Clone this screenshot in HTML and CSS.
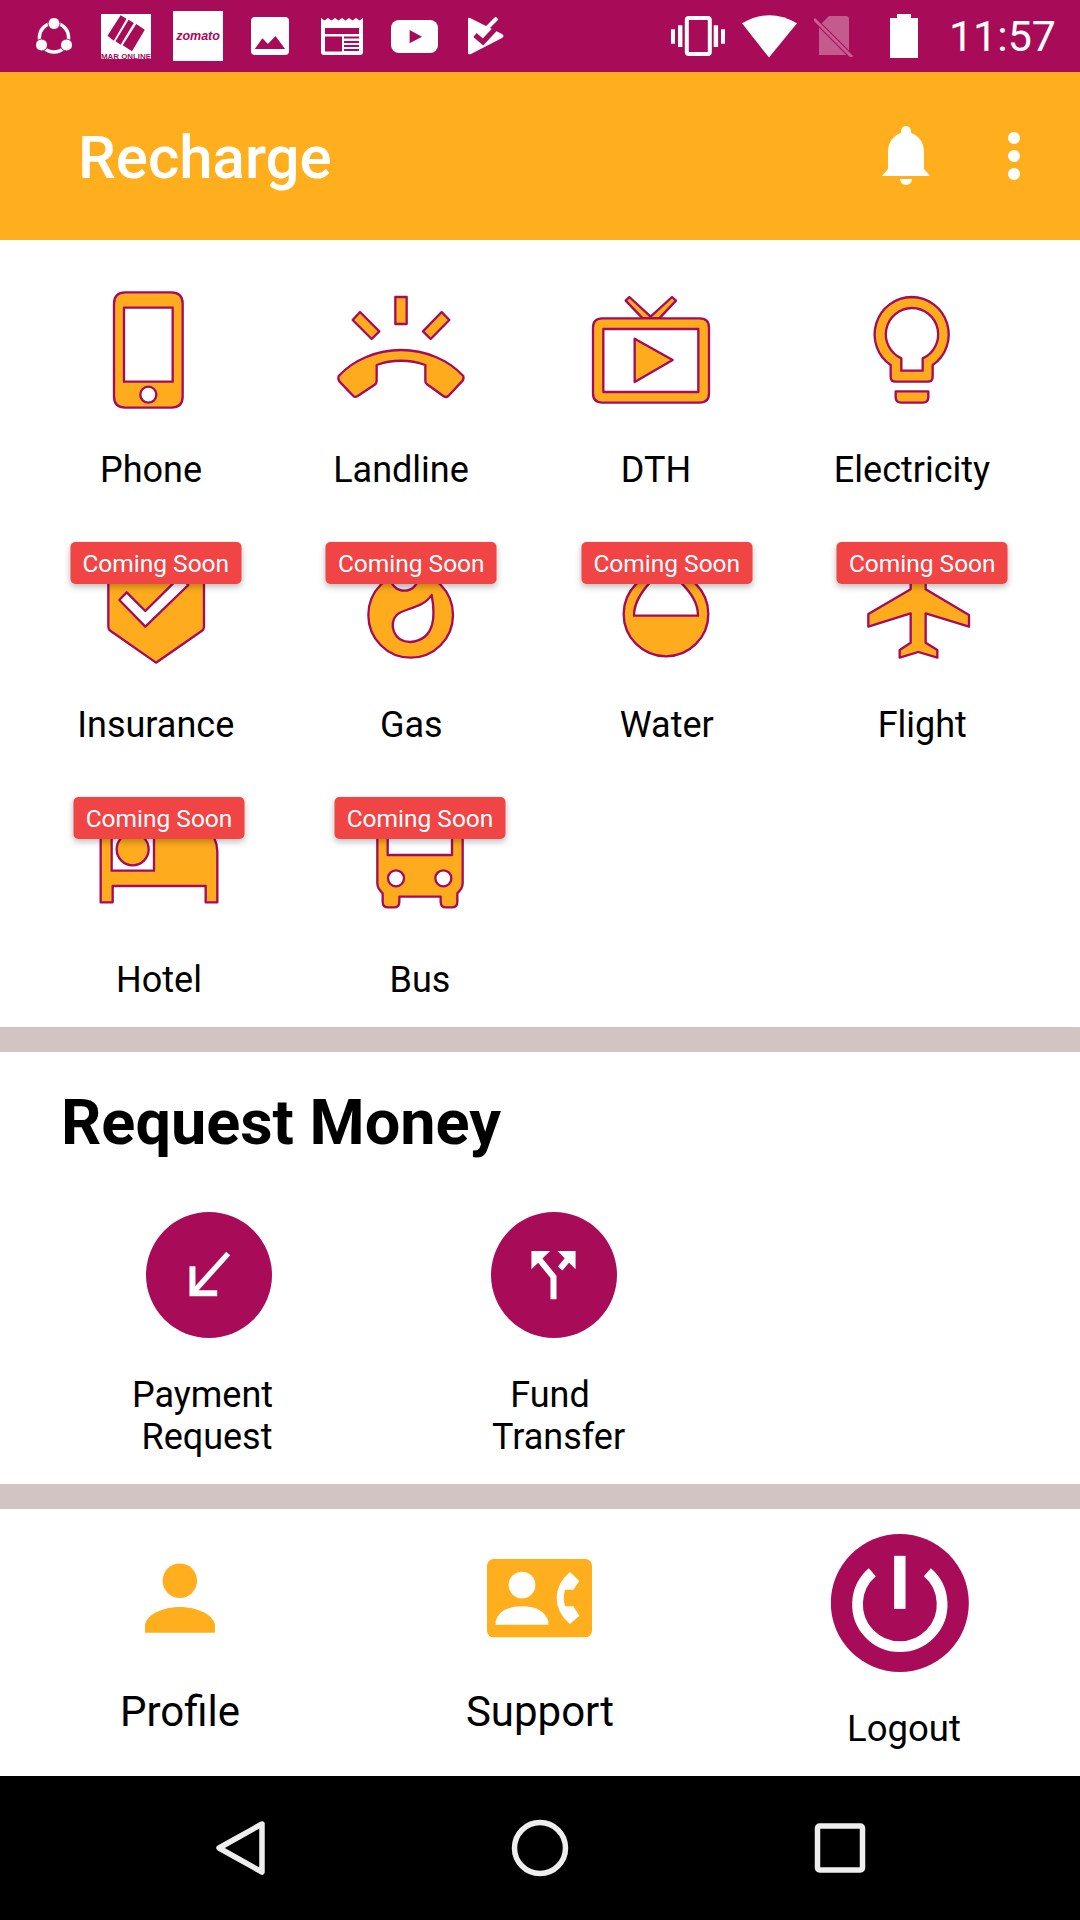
FILE: index.html
```html
<!DOCTYPE html>
<html lang="en">
<head>
    <meta charset="UTF-8">
    <meta name="viewport" content="width=device-width, initial-scale=1.0">
    <title>Recharge</title>
    <link rel="stylesheet" href="styles.css">
</head>
<body>
    <div class="screen">
        <!-- Android status bar -->
        <header class="status-bar">
            <div class="status-left">
                <span class="slot">
                    <svg width="36" height="36" viewBox="0 0 36 36">
                        <circle class="share-ring" cx="18" cy="19.5" r="14.6"/>
                        <circle class="share-dot" cx="18" cy="5.5" r="6"/><circle class="share-dot" cx="5.5" cy="27" r="6"/><circle class="share-dot" cx="30.5" cy="27" r="6"/>
                    </svg>
                </span>
                <span class="slot">
                    <svg width="50" height="45" viewBox="0 0 50 45">
                        <rect class="w" width="50" height="45"/>
                        <polygon class="p" points="19.6,1.3 25.5,4.7 12.8,26.7 6.5,21.7"/>
                        <polygon class="p" points="27.6,5.7 32.8,9 19.6,30.7 14.5,27.3"/>
                        <polygon class="p" points="35.2,10 43.8,15.7 31,37.3 21.7,31.3"/>
                        <text class="mar-text" x="0" y="44.5" textLength="50" lengthAdjust="spacingAndGlyphs">MAR ONLINE</text>
                    </svg>
                </span>
                <span class="slot"><span class="zomato">zomato</span></span>
                <span class="slot">
                    <svg width="38" height="38" viewBox="0 0 38 38">
                        <rect class="w" width="38" height="38" rx="4"/>
                        <polygon class="p" points="3.8,32 11.4,21.3 16.9,27 24.5,19 34.1,32"/>
                    </svg>
                </span>
                <span class="slot">
                    <svg width="42" height="38" viewBox="0 0 42 38">
                        <path class="w" d="M0 1 L3.5 3.5 7 1 10.5 3.5 14 1 17.5 3.5 21 1 24.5 3.5 28 1 31.5 3.5 35 1 38.5 3.5 42 1 V35 Q42 38 39 38 H3 Q0 38 0 35 Z"/>
                        <rect class="p" x="4" y="11" width="34" height="6"/>
                        <rect class="p" x="4" y="19.5" width="17" height="15"/>
                        <rect class="p" x="23" y="19.5" width="15" height="2"/>
                        <rect class="p" x="23" y="24" width="15" height="2"/>
                        <rect class="p" x="23" y="28" width="15" height="2"/>
                        <rect class="p" x="23" y="32" width="15" height="2"/>
                    </svg>
                </span>
                <span class="slot">
                    <svg width="47" height="33" viewBox="0 0 47 33">
                        <rect class="w" width="47" height="33" rx="8"/>
                        <polygon class="p" points="18.6,10 31,16.7 18.6,23.3"/>
                    </svg>
                </span>
                <span class="slot">
                    <svg width="36" height="38" viewBox="0 0 36 38">
                        <path class="w" d="M0 2 Q0 0 2 1 L34 17 Q37 19 34 21 L3 37 Q0 38 0 36 Z"/>
                        <path class="check-cut" d="M7 18 L15 25 L28 11"/>
                        <path class="check-top" d="M18 12 L29 1"/>
                    </svg>
                </span>
            </div>
            <div class="status-right">
                <svg class="st-vibrate" width="54" height="40" viewBox="0 0 54 40">
                    <rect class="outline" x="15.8" y="2" width="23" height="36" rx="2"/>
                    <rect class="w" x="0" y="13.3" width="4" height="14.4"/><rect class="w" x="7" y="9.3" width="4.4" height="21.7"/>
                    <rect class="w" x="42.7" y="9.3" width="4.4" height="21.7"/><rect class="w" x="50" y="13.3" width="4" height="14.4"/>
                </svg>
                <svg class="st-wifi" width="55" height="43" viewBox="0 0 55 43">
                    <path class="w" d="M0 8.3 Q27.5 -8 55 8.3 L27 42.5 Z"/>
                </svg>
                <svg class="st-sim" width="40" height="41" viewBox="0 0 40 41">
                    <path class="w-dim" d="M15 0 H32 Q35 0 35 3 V39 H5 V10 Z"/>
                    <path class="sim-gap" d="M0 3 L38 41"/>
                    <path class="sim-slash" d="M0 3 L38 41"/>
                </svg>
                <svg class="st-battery" width="28" height="44" viewBox="0 0 28 44">
                    <path class="w" d="M7 0 H21 V4 H28 V44 H0 V4 H7 Z"/>
                </svg>
                <span class="clock">11:57</span>
            </div>
        </header>

        <div class="app-bar">
            <h1 class="app-title">Recharge</h1>
            <div class="app-actions">
                <span class="action">
                    <svg width="48" height="60" viewBox="0 0 48 60">
                        <path class="w" d="M0 50 L6 43 V26 C6 16 12 9 19 7 V5 A5 5 0 0 1 29 5 V7 C36 9 42 16 42 26 V43 L48 50 Z"/>
                        <path class="w" d="M18 53 H30 A6 6 0 0 1 18 53 Z"/>
                    </svg>
                </span>
                <span class="action dots"><i></i><i></i><i></i></span>
            </div>
        </div>

        <section class="services">
            <div class="service-row row-one">
                <div class="service">
                    <svg class="ic" viewBox="63 45 420 390">
                        <path d="M196 67 H334 Q368 67 368 101 V379 Q368 413 334 413 H196 Q162 413 162 379 V101 Q162 67 196 67 Z M192 113 V335 H338 V113 Z M241 374 A24 24 0 1 0 289 374 A24 24 0 1 0 241 374 Z"/>
                    </svg>
                    <p class="service-name">Phone</p>
                </div>
                <div class="service">
                    <svg class="ic" viewBox="813 45 420 390">
                        <rect x="1006" y="81" width="34" height="81"/>
                        <polygon points="900,126 958,184 935,207 878,150"/>
                        <polygon points="1145,126 1168,150 1112,207 1089,184"/>
                        <path d="M836 318 C880 270 950 240 1023 240 C1096 240 1166 270 1210 318 Q1212 325 1208 332 L1165 378 Q1158 384 1150 378 L1100 342 Q1096 338 1096 332 L1096 285 C1050 268 995 268 950 285 L950 332 Q950 340 944 344 L893 378 Q885 383 880 378 L838 334 Q833 325 836 318 Z"/>
                    </svg>
                    <p class="service-name">Landline</p>
                </div>
                <div class="service">
                    <svg class="ic" viewBox="78 45 420 390">
                        <polygon points="197,92 208,81 272,140 336,81 348,92 298,145 248,145"/>
                        <path d="M127 145 H419 Q447 145 447 173 V370 Q447 398 419 398 H127 Q99 398 99 370 V173 Q99 145 127 145 Z M130 177 V366 H415 V177 Z"/>
                        <polygon points="224,206 338,270 224,336"/>
                    </svg>
                    <p class="service-name">DTH</p>
                </div>
                <div class="service">
                    <svg class="ic" viewBox="846 45 420 390">
                        <path d="M1055 81 A112 112 0 0 1 1118 285 V320 Q1118 335 1103 335 H1007 Q992 335 992 320 V285 A112 112 0 0 1 1055 81 Z M1055 114 A79 79 0 0 0 1024 265 V302 H1088 V265 A79 79 0 0 0 1055 114 Z"/>
                        <path d="M1007 364 H1105 V382 Q1105 398 1088 398 H1024 Q1007 398 1007 382 Z"/>
                    </svg>
                    <p class="service-name">Electricity</p>
                </div>
            </div>

            <div class="service-row row-two">
                <div class="service">
                    <span class="badge">Coming Soon</span>
                    <svg class="ic" viewBox="78 30 420 390">
                        <path d="M145 60 H432 V290 Q432 298 425 303 L288 398 L152 303 Q145 298 145 290 Z M178 210 L256 290 L385 165 L360 140 L256 243 L200 187 Z"/>
                    </svg>
                    <p class="service-name">Insurance</p>
                </div>
                <div class="service">
                    <span class="badge">Coming Soon</span>
                    <svg class="ic" viewBox="843 30 420 390">
                        <path d="M1052 127 C1122 127 1179 184 1179 255 C1179 326 1122 383 1052 383 C982 383 925 326 925 255 C925 184 982 127 1052 127 Z M1115 195 C1090 235 1030 235 1010 255 C985 280 1000 336 1050 336 C1130 330 1125 250 1115 195 Z"/>
                        <circle class="hole" cx="1033" cy="140" r="42"/>
                    </svg>
                    <p class="service-name">Gas</p>
                </div>
                <div class="service">
                    <span class="badge">Coming Soon</span>
                    <svg class="ic" viewBox="111 30 420 390">
                        <path d="M318 125 A127 127 0 1 1 318 379 A127 127 0 1 1 318 125 Z M222 257 H414 C414 220 395 190 360 155 L318 110 L272 155 C240 190 222 220 222 257 Z"/>
                    </svg>
                    <p class="service-name">Water</p>
                </div>
                <div class="service">
                    <span class="badge">Coming Soon</span>
                    <svg class="ic" viewBox="879 30 420 390">
                        <path d="M1055 120 Q1078 90 1100 120 V178 L1230 255 V290 L1100 250 V338 L1135 360 V383 L1078 366 L1022 383 V360 L1055 338 V250 L928 290 V252 L1055 178 Z"/>
                    </svg>
                    <p class="service-name">Flight</p>
                </div>
            </div>

            <div class="service-row row-three">
                <div class="service">
                    <span class="badge">Coming Soon</span>
                    <svg class="ic" viewBox="87 45 420 390">
                        <path d="M122 130 H430 Q472 170 472 215 V367 H437 V318 H158 V367 H122 Z M155 130 V272 H282 V130 Z"/>
                        <circle cx="218" cy="208" r="48"/>
                    </svg>
                    <p class="service-name">Hotel</p>
                </div>
                <div class="service">
                    <span class="badge">Coming Soon</span>
                    <svg class="ic" viewBox="870 45 420 390">
                        <path d="M952 120 H1208 V310 Q1208 325 1192 340 V365 Q1192 382 1175 382 H1158 Q1142 382 1142 365 V350 H1018 V365 Q1018 382 1002 382 H985 Q968 382 968 365 V340 Q952 325 952 310 Z M983 130 V225 H1176 V130 Z M984 295 A24 24 0 1 0 1032 295 A24 24 0 1 0 984 295 Z M1126 295 A24 24 0 1 0 1174 295 A24 24 0 1 0 1126 295 Z"/>
                    </svg>
                    <p class="service-name">Bus</p>
                </div>
            </div>
        </section>

        <div class="divider"></div>

        <section class="request">
            <h2 class="request-title">Request Money</h2>
            <div class="request-row">
                <div class="request-item item-payment">
                    <svg class="round" viewBox="78 66 377 377">
                        <circle class="p" cx="266.5" cy="254.5" r="188.5"/>
                        <path class="arrow" d="M217 228 V309 H291"/>
                        <path class="arrow-thin" d="M217 309 L324 190"/>
                    </svg>
                    <p class="request-name">Payment
 Request</p>
                </div>
                <div class="request-item item-fund">
                    <svg class="round" viewBox="1113 66 377 377">
                        <circle class="p" cx="1301.5" cy="254.5" r="188.5"/>
                        <path class="arrow" d="M1300 327 V260 L1255 205"/>
                        <path class="arrow" d="M1320 235 L1345 205"/>
                        <polygon class="w" points="1234,183 1290,183 1234,237"/>
                        <polygon class="w" points="1366,183 1312,183 1366,237"/>
                    </svg>
                    <p class="request-name">Fund
  Transfer</p>
                </div>
            </div>
        </section>

        <div class="divider"></div>

        <section class="account">
            <div class="account-item">
                <svg class="account-ic" width="70" height="79" viewBox="103 148 211 237">
                    <circle class="o" cx="208" cy="213" r="52"/>
                    <path class="o" d="M103 370 V345 C110 310 165 292 208 292 C251 292 306 310 314 345 V370 Z"/>
                </svg>
                <p class="account-name">Profile</p>
            </div>
            <div class="account-item">
                <svg class="account-ic support-ic" width="105" height="79" viewBox="1131 148 315 237">
                    <rect class="o" x="1131" y="148" width="315" height="235" rx="20"/>
                    <circle class="w" cx="1236" cy="226" r="40"/>
                    <path class="w" d="M1157 345 V335 Q1170 290 1236 290 Q1300 290 1315 335 V345 Z"/>
                    <path class="w" d="M1380 187 L1408 214 L1390 240 H1365 Q1358 265 1365 290 H1390 L1408 318 L1380 343 Q1340 310 1340 265 Q1340 220 1380 187 Z"/>
                </svg>
                <p class="account-name">Support</p>
            </div>
            <div class="account-item logout">
                <svg width="138" height="138" viewBox="95 72 411 411">
                    <circle class="p" cx="300" cy="277.5" r="205.5"/>
                    <rect class="w" x="283" y="137" width="34" height="158"/>
                    <path class="power" d="M218 186 A126 126 0 1 0 382 186"/>
                </svg>
                <p class="logout-name">Logout</p>
            </div>
        </section>

        <!-- Android navigation bar -->
        <nav class="nav-bar">
            <svg width="60" height="60" viewBox="0 0 60 60">
                <path class="nav-ic" d="M52 6 L9 30 L52 54 Z"/>
            </svg>
            <svg width="60" height="60" viewBox="0 0 60 60">
                <circle class="nav-ic" cx="30" cy="30" r="25.5"/>
            </svg>
            <svg width="60" height="60" viewBox="0 0 60 60">
                <rect class="nav-ic" x="7.5" y="8" width="45" height="44" rx="2"/>
            </svg>
        </nav>
    </div>
</body>
</html>
```

FILE: styles.css
```css
* {
    box-sizing: border-box;
}

body {
    margin: 0;
    background: #fff;
    font-family: Roboto, "Liberation Sans", sans-serif;
    color: #000;
}

p, h1, h2 {
    margin: 0;
}

.screen {
    width: 1080px;
    height: 1920px;
    display: flex;
    flex-direction: column;
    overflow: hidden;
}

svg {
    display: block;
    flex-shrink: 0;
}

/* shared svg fills */
.w { fill: #fff; }
.p { fill: #a80b58; }
.o { fill: #ffae1d; }
.w-dim { fill: rgba(255, 255, 255, 0.33); }

/* status bar */
.status-bar {
    height: 72px;
    background: #a80b58;
    display: flex;
    justify-content: space-between;
    align-items: center;
    padding: 0 24px 0 18px;
}

.status-left {
    display: flex;
    align-items: center;
}

.slot {
    width: 72px;
    display: flex;
    justify-content: center;
}

.share-ring {
    fill: none;
    stroke: #fff;
    stroke-width: 3.5;
}

.share-dot {
    fill: #fff;
    stroke: #a80b58;
    stroke-width: 1;
}

.mar-text {
    font-size: 7.5px;
    font-weight: bold;
    fill: #a80b58;
    font-family: "Liberation Sans", sans-serif;
}

.zomato {
    width: 50px;
    height: 50px;
    background: #fff;
    color: #a80b58;
    font-family: "Liberation Sans", sans-serif;
    font-size: 12.5px;
    font-weight: bold;
    font-style: italic;
    line-height: 50px;
    text-align: center;
}

.check-cut {
    fill: none;
    stroke: #a80b58;
    stroke-width: 5;
}

.check-top {
    fill: none;
    stroke: #fff;
    stroke-width: 4;
}

.status-right {
    display: flex;
    align-items: center;
}

.outline {
    fill: none;
    stroke: #fff;
    stroke-width: 4;
}

.st-vibrate { margin-right: 17px; }
.st-wifi { margin-right: 17px; }
.st-sim { margin-right: 36px; }
.st-battery { margin-right: 31px; }

.sim-gap {
    stroke: #a80b58;
    stroke-width: 5;
}

.sim-slash {
    stroke: rgba(255, 255, 255, 0.35);
    stroke-width: 3;
}

.clock {
    color: #fff;
    font-size: 43px;
    line-height: 44px;
    white-space: nowrap;
}

/* app bar */
.app-bar {
    height: 168px;
    background: #ffae1d;
    display: flex;
    justify-content: space-between;
    align-items: center;
    padding: 0 12px 0 78px;
}

.app-title {
    color: #fff;
    font-size: 60px;
    font-weight: 500;
    line-height: 68px;
    padding-top: 3px;
}

.app-actions {
    display: flex;
    align-items: center;
}

.action {
    width: 108px;
    display: flex;
    justify-content: center;
}

.dots {
    flex-direction: column;
    align-items: center;
    gap: 6px;
}

.dots i {
    width: 12px;
    height: 12px;
    border-radius: 50%;
    background: #fff;
}

/* service grid */
.services {
    height: 787px;
    padding-top: 45px;
}

.service-row {
    display: grid;
    margin-bottom: 49px;
}

.row-one {
    grid-template-columns: 256px 244px 266px 246px;
    margin-left: 23px;
}

.row-two {
    grid-template-columns: repeat(4, 255.5px);
    margin-left: 28px;
}

.row-three {
    grid-template-columns: 256px 266px;
    margin-left: 31px;
}

.service {
    position: relative;
    display: flex;
    flex-direction: column;
    align-items: center;
}

.ic {
    width: 140px;
    height: 130px;
    fill: #ffab1e;
    fill-rule: evenodd;
    stroke: #a50b5c;
    stroke-width: 7;
    stroke-linejoin: round;
}

.ic .hole {
    fill: #f3e6ee;
}

.service-name {
    margin-top: 34px;
    font-size: 36px;
    line-height: 42px;
    text-align: center;
}

.badge {
    position: absolute;
    top: 2px;
    left: 50%;
    transform: translateX(-50%);
    width: 171px;
    height: 42px;
    background: #f04445;
    border-radius: 5px;
    box-shadow: 0 3px 6px rgba(0, 0, 0, 0.25);
    color: #fff;
    font-size: 24.5px;
    line-height: 43px;
    text-align: center;
    white-space: nowrap;
}

.divider {
    height: 25px;
    background: #d3c4c4;
    flex-shrink: 0;
}

/* request money */
.request {
    height: 432px;
    padding: 37px 0 0 61px;
}

.request-title {
    font-size: 63px;
    font-weight: 700;
    line-height: 68px;
}

.request-row {
    display: flex;
    margin-top: 55px;
    margin-left: -24.5px;
}

.request-item {
    width: 345px;
    display: flex;
    flex-direction: column;
    align-items: center;
}

.round {
    width: 126px;
    height: 126px;
}

.arrow {
    fill: none;
    stroke: #fff;
    stroke-width: 18;
}

.arrow-thin {
    fill: none;
    stroke: #fff;
    stroke-width: 16;
}

.request-name {
    margin-top: 36px;
    font-size: 36px;
    line-height: 42px;
    text-align: center;
    white-space: pre;
}

.item-payment .request-name {
    margin-right: 13px;
}

.item-fund .request-name {
    margin-right: 8px;
}

/* profile, support, logout */
.account {
    height: 267px;
    display: grid;
    grid-template-columns: repeat(3, 360px);
}

.account-item {
    display: flex;
    flex-direction: column;
    align-items: center;
    padding-top: 50px;
}

.support-ic {
    margin-right: 2px;
}

.account-name {
    margin-top: 50px;
    font-size: 42px;
    line-height: 48px;
}

.logout {
    padding-top: 25px;
}

.power {
    fill: none;
    stroke: #fff;
    stroke-width: 32;
}

.logout-name {
    margin-top: 35px;
    padding-left: 8px;
    font-size: 36.5px;
    line-height: 44px;
}

/* nav bar */
.nav-bar {
    height: 144px;
    background: #000;
    display: grid;
    grid-template-columns: repeat(3, 300px);
    justify-content: center;
    justify-items: center;
    align-items: center;
}

.nav-ic {
    fill: none;
    stroke: #eee;
    stroke-width: 5.5;
    stroke-linejoin: round;
}
```
